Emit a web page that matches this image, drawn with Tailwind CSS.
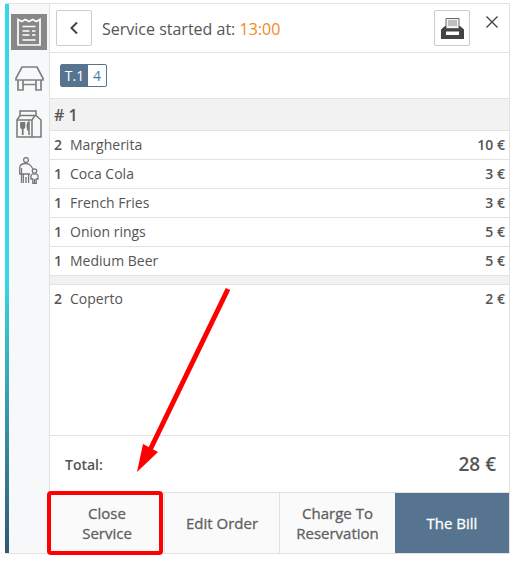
<!DOCTYPE html>
<html lang="en">
<head>
    <meta charset="UTF-8">
    <title>Service</title>
    <script src="https://cdn.jsdelivr.net/npm/@tailwindcss/browser@4"></script>
</head>
<body class="bg-white font-['Open_Sans',sans-serif] text-[#555]">
    <div class="relative w-[521px] h-[564px] overflow-hidden">
        <div class="ml-[5px] mt-[3px] w-[505px] h-[551px] flex border-t border-b border-r border-[#e2e2e2] box-border">
            <!-- colored strip -->
            <div class="w-[4px] shrink-0 bg-gradient-to-b from-[#36d7e6] from-50% to-[#2f5a72]"></div>

            <!-- sidebar -->
            <div class="w-[41px] shrink-0 bg-[#f7f8fa] border-r border-[#e2e2e2] flex flex-col items-center">
                <div class="mt-[10px] w-[36px] h-[36px] bg-[#888] flex items-center justify-center">
                    <svg width="24" height="28" viewBox="0 0 24 28" fill="none" stroke="#fff">
                        <path d="M1 27V1.500l3.700 2 3.600-2 3.700 2 3.700-2 3.600 2 3.700-2V27z" stroke-width="1.700"/>
                        <path d="M5.500 8.500h13M5.500 13h7M15 13h3.500M5.500 17h7M15 17h3.500M5.500 22h13" stroke-width="1.700"/>
                    </svg>
                </div>
                <svg class="mt-[16px]" width="29" height="25" viewBox="0 0 29 25" fill="none" stroke="#808080" stroke-width="1.700">
                    <path d="M7 1h15l5.500 10.500a1 1 0 01.500 1V14H1v-1.500a1 1 0 01.500-1z"/>
                    <path d="M3 14v10h5V14M21 14v10h5V14M8 18.500h13"/>
                </svg>
                <svg class="mt-[19px]" width="26" height="28" viewBox="0 0 26 28" fill="none" stroke="#777" stroke-width="1.500">
                    <path d="M4 1h16v4.500H4zM4 5.500L1 10v17h24V10l-5-4.500"/>
                    <path d="M1 10h15l3-4.500M16 10v17"/>
                    <path d="M5 12v4.500a1.700 1.700 0 003.400 0V12M6.700 12v13" stroke-width="1.800"/>
                    <path d="M12.500 12c-1.500 1-1.500 6-.5 8h1v5V12z" fill="#777"/>
                </svg>
                <svg class="mt-[19px]" width="20" height="27" viewBox="0 0 20 27" fill="none" stroke="#777" stroke-width="1.300">
                    <circle cx="7" cy="3" r="2.400"/>
                    <path d="M2.500 26V17H.700v-6c0-3 2-4.500 6.300-4.500 2.500 0 4 1 5 2.500l2 3"/>
                    <path d="M2.500 11v6M2.500 17h8.500M4.300 17v9M7 20v6M9.600 17v9"/>
                    <circle cx="15.500" cy="14" r="2.200"/>
                    <path d="M12 22v-3.200c0-1.300 1.500-2 3.500-2s3.500.7 3.500 2V22h-1.800v4.500h-3.400V22zM15.500 22v4.500"/>
                </svg>
            </div>

            <!-- main panel -->
            <div class="flex-1 min-w-0 flex flex-col">
                <div class="h-[49px] shrink-0 border-b border-[#e2e2e2] flex items-start pl-[6px] pr-[11px] pt-[6px]">
                    <button class="w-[36px] h-[36px] border border-[#ccc] rounded-[2px] flex items-center justify-center bg-white">
                        <svg width="10" height="14" viewBox="0 0 10 14" fill="none" stroke="#444" stroke-width="2"><path d="M8 1.500L2.500 7 8 12.500"/></svg>
                    </button>
                    <div class="ml-[10px] mt-[1px] h-[36px] flex items-center text-[16px] text-[#555]">Service started at:&nbsp;<span class="text-[#f08a1d]">13:00</span></div>
                    <button class="ml-auto w-[36px] h-[36px] border border-[#ccc] rounded-[2px] flex items-center justify-center bg-white">
                        <svg width="23" height="21" viewBox="0 0 23 21">
                            <path d="M5 .500h13v10H5z" fill="#f3f3f3" stroke="#666" stroke-width="1"/>
                            <path d="M7 3h9M7 5h9M7 7h9" stroke="#888" stroke-width="1"/>
                            <path d="M4 8h1v3h13V8h1l4 3.500V21H0V11.500z" fill="#444"/>
                            <path d="M5 13.500h13v3.500H5z" fill="#fff"/>
                        </svg>
                    </button>
                    <button class="ml-[16px] mt-[6px] w-[12px] h-[12px] flex items-center justify-center">
                        <svg width="12" height="12" viewBox="0 0 12 12" fill="none" stroke="#444" stroke-width="1.400"><path d="M.500.500l11 11M11.500.500l-11 11"/></svg>
                    </button>
                </div>

                <div class="h-[46px] shrink-0 border-b border-[#e2e2e2] flex items-center pl-[10px]">
                    <div class="flex h-[23px] border border-[#56748f] rounded-[2px] text-[14px] leading-[21px]">
                        <span class="w-[27px] text-center bg-[#56748f] text-white">T.1</span>
                        <span class="w-[18px] text-center text-[#4a7ba6]">4</span>
                    </div>
                </div>

                <div class="h-[32px] shrink-0 bg-[#f2f2f2] border-b border-[#e2e2e2] flex items-center pl-[4px] pr-[4px] text-[16px] font-semibold text-[#555]"># 1</div>

                <div class="h-[29px] shrink-0 border-b border-[#e2e2e2] flex items-center pl-[4px] pr-[4px] pb-[2px] text-[14px]"><b class="w-[16px] font-semibold">2</b>Margherita<b class="ml-auto font-semibold">10 €</b></div>
                <div class="h-[29px] shrink-0 border-b border-[#e2e2e2] flex items-center pl-[4px] pr-[4px] pb-[2px] text-[14px]"><b class="w-[16px] font-semibold">1</b>Coca Cola<b class="ml-auto font-semibold">3 €</b></div>
                <div class="h-[29px] shrink-0 border-b border-[#e2e2e2] flex items-center pl-[4px] pr-[4px] pb-[2px] text-[14px]"><b class="w-[16px] font-semibold">1</b>French Fries<b class="ml-auto font-semibold">3 €</b></div>
                <div class="h-[29px] shrink-0 border-b border-[#e2e2e2] flex items-center pl-[4px] pr-[4px] pb-[2px] text-[14px]"><b class="w-[16px] font-semibold">1</b>Onion rings<b class="ml-auto font-semibold">5 €</b></div>
                <div class="h-[29px] shrink-0 border-b border-[#e2e2e2] flex items-center pl-[4px] pr-[4px] pb-[2px] text-[14px]"><b class="w-[16px] font-semibold">1</b>Medium Beer<b class="ml-auto font-semibold">5 €</b></div>

                <div class="h-[9px] shrink-0 bg-[#f2f2f2] border-b border-[#e2e2e2]"></div>
                <div class="h-[29px] shrink-0 flex items-center pl-[4px] pr-[4px] pb-[2px] text-[14px]"><b class="w-[16px] font-semibold">2</b>Coperto<b class="ml-auto font-semibold">2 €</b></div>

                <div class="flex-1"></div>

                <div class="h-[57px] shrink-0 border-t border-[#e2e2e2] flex items-center pl-[15px] pr-[13px]">
                    <span class="text-[14px] font-semibold">Total:</span>
                    <span class="ml-auto text-[19px] font-semibold">28 €</span>
                </div>

                <div class="h-[61px] shrink-0 border-t border-[#e2e2e2] flex text-[15px] leading-[20px] text-center [-webkit-text-stroke:0.3px]">
                    <button class="w-[115px] bg-[#fafafa] border-r border-[#e2e2e2] text-[#606060]">Close<br>Service</button>
                    <button class="w-[115px] bg-[#fafafa] border-r border-[#e2e2e2] text-[#606060]">Edit Order</button>
                    <button class="w-[115px] bg-[#fafafa] text-[#606060]">Charge To<br>Reservation</button>
                    <button class="flex-1 bg-[#56748f] text-white">The Bill</button>
                </div>
            </div>
        </div>

        <!-- red annotation -->
        <div class="absolute left-[47px] top-[491px] w-[116px] h-[64px] border-[4px] border-[#ff0000] rounded-[4px]"></div>
        <svg class="absolute left-0 top-0" width="521" height="564" viewBox="0 0 521 564">
            <path d="M228 289L150 450" stroke="#ff0000" stroke-width="5" fill="none"/>
            <path d="M137 472L143 444 158 452z" fill="#ff0000"/>
        </svg>
    </div>
</body>
</html>
